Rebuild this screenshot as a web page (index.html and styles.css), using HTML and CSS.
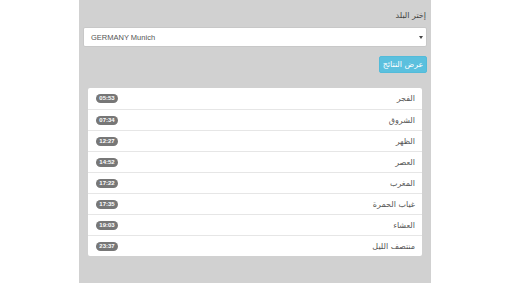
FILE: index.html
```html
<!DOCTYPE html>
<html lang="ar">
<head>
<meta charset="utf-8">
<link rel="stylesheet" href="styles.css">
</head>
<body>
<div class="panel" dir="rtl">
  <label class="label">إختر البلد</label>
  <div class="select" dir="ltr">
    <span class="sel-text">GERMANY Munich</span>
    <span class="caret"></span>
  </div>
  <div class="btn-row">
    <button class="btn">عرض النتائج</button>
  </div>
  <ul class="list">
    <li class="item"><span class="name">الفجر</span><span class="badge">05:53</span></li>
    <li class="item"><span class="name">الشروق</span><span class="badge">07:34</span></li>
    <li class="item"><span class="name">الظهر</span><span class="badge">12:27</span></li>
    <li class="item"><span class="name">العصر</span><span class="badge">14:52</span></li>
    <li class="item"><span class="name">المغرب</span><span class="badge">17:22</span></li>
    <li class="item"><span class="name">غياب الحمرة</span><span class="badge">17:35</span></li>
    <li class="item"><span class="name">العشاء</span><span class="badge">19:03</span></li>
    <li class="item"><span class="name">منتصف الليل</span><span class="badge">23:37</span></li>
  </ul>
</div>
</body>
</html>
```
FILE: styles.css
```css
html, body {
  margin: 0;
  padding: 0;
  background: #ffffff;
  font-family: "Liberation Sans", "DejaVu Sans", Arial, sans-serif;
  color: #333;
}
.panel {
  width: 352px;
  height: 283px;
  margin: 0 auto;
  position: relative;
  left: -1px;
  background: #d1d1d1;
  box-sizing: border-box;
  padding: 10px 4px 0;
  display: flex;
  flex-direction: column;
}
.label {
  display: block;
  font-family: "DejaVu Sans", sans-serif;
  font-size: 8px;
  line-height: 12px;
  color: #444;
  margin-bottom: 5px;
  padding-right: 1px;
}
.select {
  height: 20px;
  background: #fff;
  border: 1px solid #c8c8c8;
  border-radius: 2px;
  box-sizing: border-box;
  display: flex;
  align-items: center;
  justify-content: space-between;
  padding: 0 3px 0 7px;
}
.sel-text {
  font-size: 7.5px;
  color: #555;
}
.caret {
  width: 0;
  height: 0;
  border-left: 2px solid transparent;
  border-right: 2px solid transparent;
  border-top: 3px solid #444;
}
.btn-row {
  display: flex;
  margin-top: 9px;
}
.btn {
  height: 17px;
  width: 48px;
  padding: 0;
  border: 1px solid #53bbd9;
  border-radius: 2px;
  background: #5bc0de;
  color: #fff;
  font-family: "DejaVu Sans", sans-serif;
  font-size: 8px;
}
.list {
  list-style: none;
  margin: 15px 5px 0;
  padding: 0;
  background: #fff;
  border-radius: 2px;
}
.item {
  height: 21px;
  box-sizing: border-box;
  display: flex;
  align-items: center;
  justify-content: space-between;
  padding: 0 7px 0 8px;
  border-top: 1px solid #e6e6e6;
}
.item:first-child {
  border-top: none;
}
.name {
  font-family: "DejaVu Sans", sans-serif;
  font-size: 8px;
  color: #555;
}
.badge {
  background: #777;
  color: #fff;
  font-size: 6px;
  font-weight: bold;
  line-height: 9px;
  height: 9px;
  width: 22px;
  text-align: center;
  border-radius: 5px;
  direction: ltr;
}
```
